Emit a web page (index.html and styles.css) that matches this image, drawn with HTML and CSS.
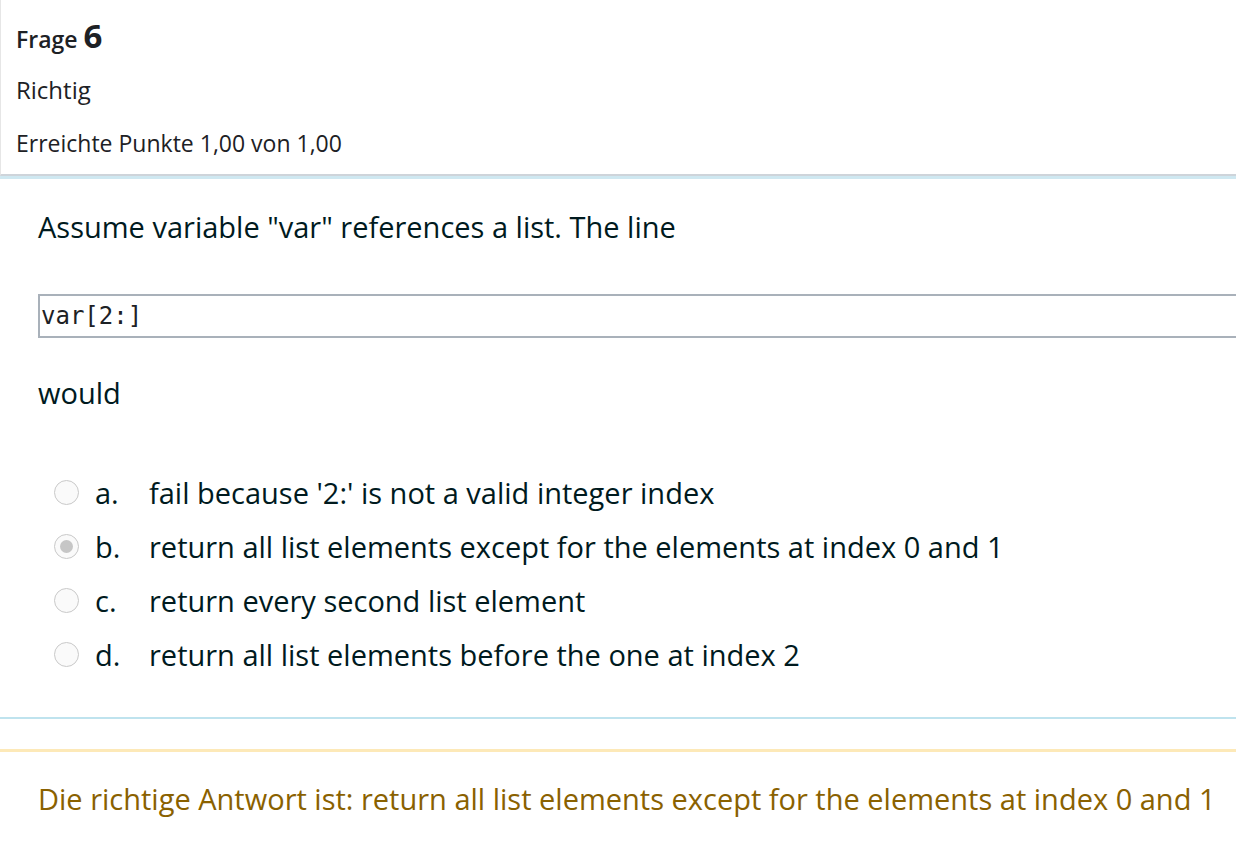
FILE: index.html
```html
<!DOCTYPE html>
<html>
<head>
<meta charset="utf-8">
<link rel="stylesheet" href="styles.css">
</head>
<body>
<div class="que">
  <div class="info">
    <h3 class="no">Frage <span class="qno">6</span></h3>
    <div class="state">Richtig</div>
    <div class="grade">Erreichte Punkte 1,00 von 1,00</div>
  </div>
  <div class="formulation">
    <p class="qtext">Assume variable "var" references a list. The line</p>
    <div class="code">var[2:]</div>
    <p class="qtext would">would</p>
    <div class="answers">
      <div class="opt"><span class="radio"></span><span class="letter">a.</span><span class="txt">fail because '2:' is not a valid integer index</span></div>
      <div class="opt"><span class="radio checked"></span><span class="letter">b.</span><span class="txt">return all list elements except for the elements at index 0 and 1</span></div>
      <div class="opt"><span class="radio"></span><span class="letter">c.</span><span class="txt">return every second list element</span></div>
      <div class="opt"><span class="radio"></span><span class="letter">d.</span><span class="txt">return all list elements before the one at index 2</span></div>
    </div>
  </div>
  <div class="outcome">
    <div class="rightanswer">Die richtige Antwort ist: return all list elements except for the elements at index 0 and 1</div>
  </div>
</div>
</body>
</html>
```
FILE: styles.css
```css
html, body {
  margin: 0;
  padding: 0;
  background: #fff;
}
body {
  font-family: "Open Sans", "Noto Sans", sans-serif;
  color: #1d2125;
  width: 1236px;
  overflow: hidden;
}
.info {
  border-left: 1px solid #e6e6e6;
  border-bottom: 2px solid #ced4da;
  padding: 20px 0 16px 15px;
  height: 138px;
}
.no {
  margin: 0;
  font-size: 23px;
  font-weight: 600;
  line-height: 32px;
  height: 54px;
}
.qno {
  font-size: 33px;
  font-weight: 700;
}
.state {
  font-size: 24px;
  line-height: 32px;
  height: 53px;
}
.grade {
  font-size: 23px;
  line-height: 32px;
}
.formulation {
  border-top: 3px solid #cfe8f1;
  border-bottom: 2px solid #bfe3ee;
  padding: 28px 0 36px 38px;
  color: #001a1e;
}
.qtext {
  margin: 0;
  font-size: 29px;
  line-height: 40px;
}
.code {
  margin-top: 47px;
  border: 2px solid #a9b1ba;
  border-right: none;
  height: 40px;
  font-family: "DejaVu Sans Mono", monospace;
  font-size: 24px;
  line-height: 40px;
  padding-left: 1px;
  color: #1d2125;
}
.would {
  margin-top: 35px;
}
.answers {
  margin-top: 52px;
  padding-left: 16px;
}
.opt {
  display: flex;
  align-items: center;
  height: 54px;
  font-size: 29px;
}
.radio {
  width: 25px;
  height: 25px;
  border: 1px solid #c9c9c9;
  border-radius: 50%;
  background: #fafafa;
  box-sizing: border-box;
  flex: none;
  position: relative;
}
.radio.checked::after {
  content: "";
  position: absolute;
  left: 5px;
  top: 5px;
  width: 13px;
  height: 13px;
  border-radius: 50%;
  background: #c6c6c6;
}
.letter {
  width: 54px;
  margin-left: 16px;
}
.outcome {
  margin-top: 30px;
  border-top: 3px solid #fde9b8;
  padding: 27px 0 0 38px;
}
.rightanswer {
  color: #8a6100;
  font-size: 29px;
  line-height: 40px;
  white-space: nowrap;
}
```
